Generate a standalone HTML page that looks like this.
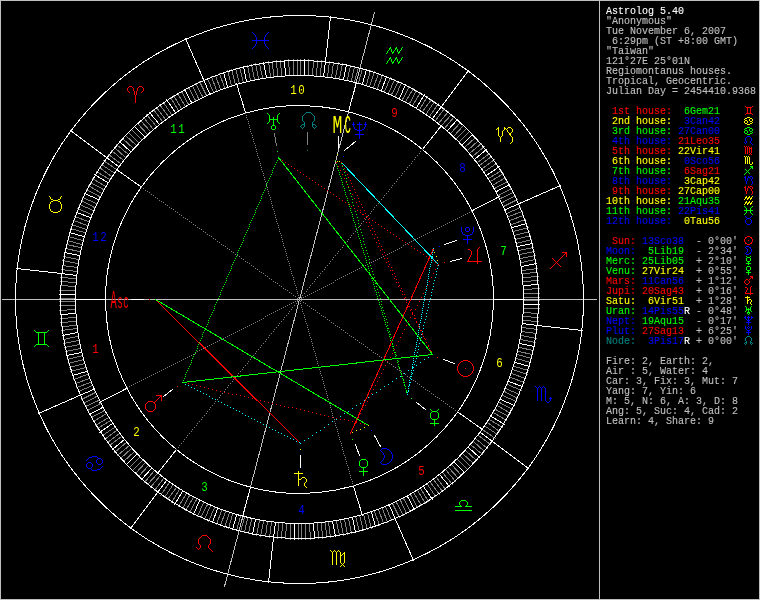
<!DOCTYPE html>
<html><head><meta charset="utf-8"><title>Astrolog 5.40</title>
<style>
html,body{margin:0;padding:0;background:#000;}
svg{display:block}
.t{font-family:"Liberation Mono",monospace;font-size:10px;stroke-width:.1px;white-space:pre;}
.g{font-family:"Liberation Mono",monospace;font-size:25.8px}
.h{font-family:"Liberation Mono",monospace;font-size:13.5px}
svg{will-change:transform}
line,circle,path,polyline{stroke-width:1;shape-rendering:crispEdges}
line{stroke-linecap:square}
path{fill:none;stroke-linecap:square;stroke-linejoin:miter}
.d{stroke-linecap:butt;shape-rendering:crispEdges}
</style></head><body>
<svg width="760" height="600" viewBox="0 0 760 600">
<rect width="760" height="600" fill="#000"/>
<line x1="2.5" y1="299.5" x2="596.5" y2="299.5" stroke="#c0c0c0" />
<line x1="374.5" y1="12.5" x2="224.5" y2="586.5" stroke="#c0c0c0" />
<line x1="209.5" y1="93.5" x2="203.5" y2="79.5" stroke="#ffffff" />
<line x1="206.5" y1="95.5" x2="199.5" y2="81.5" stroke="#808080" />
<line x1="202.5" y1="96.5" x2="195.5" y2="83.5" stroke="#808080" />
<line x1="198.5" y1="98.5" x2="192.5" y2="85.5" stroke="#808080" />
<line x1="195.5" y1="100.5" x2="188.5" y2="87.5" stroke="#808080" />
<line x1="191.5" y1="102.5" x2="184.5" y2="89.5" stroke="#ffffff" />
<line x1="188.5" y1="104.5" x2="181.5" y2="91.5" stroke="#808080" />
<line x1="185.5" y1="106.5" x2="177.5" y2="93.5" stroke="#808080" />
<line x1="181.5" y1="108.5" x2="173.5" y2="95.5" stroke="#808080" />
<line x1="178.5" y1="110.5" x2="170.5" y2="97.5" stroke="#808080" />
<line x1="175.5" y1="112.5" x2="166.5" y2="99.5" stroke="#ffffff" />
<line x1="171.5" y1="114.5" x2="163.5" y2="102.5" stroke="#808080" />
<line x1="168.5" y1="116.5" x2="159.5" y2="104.5" stroke="#808080" />
<line x1="165.5" y1="119.5" x2="156.5" y2="107.5" stroke="#808080" />
<line x1="162.5" y1="121.5" x2="153.5" y2="109.5" stroke="#808080" />
<line x1="159.5" y1="124.5" x2="149.5" y2="112.5" stroke="#ffffff" />
<line x1="156.5" y1="126.5" x2="146.5" y2="114.5" stroke="#808080" />
<line x1="153.5" y1="129.5" x2="143.5" y2="117.5" stroke="#808080" />
<line x1="150.5" y1="131.5" x2="140.5" y2="120.5" stroke="#808080" />
<line x1="147.5" y1="134.5" x2="137.5" y2="123.5" stroke="#808080" />
<line x1="144.5" y1="136.5" x2="134.5" y2="126.5" stroke="#ffffff" />
<line x1="141.5" y1="139.5" x2="131.5" y2="129.5" stroke="#808080" />
<line x1="138.5" y1="142.5" x2="128.5" y2="132.5" stroke="#808080" />
<line x1="136.5" y1="145.5" x2="125.5" y2="135.5" stroke="#808080" />
<line x1="133.5" y1="148.5" x2="122.5" y2="138.5" stroke="#808080" />
<line x1="130.5" y1="151.5" x2="119.5" y2="141.5" stroke="#ffffff" />
<line x1="128.5" y1="154.5" x2="116.5" y2="144.5" stroke="#808080" />
<line x1="125.5" y1="157.5" x2="114.5" y2="147.5" stroke="#808080" />
<line x1="123.5" y1="160.5" x2="111.5" y2="150.5" stroke="#808080" />
<line x1="120.5" y1="163.5" x2="108.5" y2="154.5" stroke="#808080" />
<line x1="118.5" y1="166.5" x2="106.5" y2="157.5" stroke="#ffffff" />
<line x1="116.5" y1="169.5" x2="103.5" y2="160.5" stroke="#808080" />
<line x1="113.5" y1="172.5" x2="101.5" y2="164.5" stroke="#808080" />
<line x1="111.5" y1="176.5" x2="99.5" y2="167.5" stroke="#808080" />
<line x1="109.5" y1="179.5" x2="96.5" y2="171.5" stroke="#808080" />
<line x1="107.5" y1="182.5" x2="94.5" y2="174.5" stroke="#ffffff" />
<line x1="105.5" y1="186.5" x2="92.5" y2="178.5" stroke="#808080" />
<line x1="103.5" y1="189.5" x2="90.5" y2="182.5" stroke="#808080" />
<line x1="101.5" y1="193.5" x2="88.5" y2="185.5" stroke="#808080" />
<line x1="99.5" y1="196.5" x2="86.5" y2="189.5" stroke="#808080" />
<line x1="98.5" y1="199.5" x2="84.5" y2="193.5" stroke="#ffffff" />
<line x1="96.5" y1="203.5" x2="82.5" y2="197.5" stroke="#808080" />
<line x1="94.5" y1="207.5" x2="81.5" y2="200.5" stroke="#808080" />
<line x1="93.5" y1="210.5" x2="79.5" y2="204.5" stroke="#808080" />
<line x1="91.5" y1="214.5" x2="77.5" y2="208.5" stroke="#808080" />
<line x1="90.5" y1="217.5" x2="76.5" y2="212.5" stroke="#ffffff" />
<line x1="88.5" y1="221.5" x2="74.5" y2="216.5" stroke="#808080" />
<line x1="87.5" y1="225.5" x2="73.5" y2="220.5" stroke="#808080" />
<line x1="86.5" y1="229.5" x2="71.5" y2="224.5" stroke="#808080" />
<line x1="84.5" y1="232.5" x2="70.5" y2="228.5" stroke="#808080" />
<line x1="83.5" y1="236.5" x2="69.5" y2="232.5" stroke="#ffffff" />
<line x1="82.5" y1="240.5" x2="68.5" y2="236.5" stroke="#808080" />
<line x1="81.5" y1="244.5" x2="67.5" y2="240.5" stroke="#808080" />
<line x1="80.5" y1="247.5" x2="66.5" y2="244.5" stroke="#808080" />
<line x1="79.5" y1="251.5" x2="65.5" y2="248.5" stroke="#808080" />
<line x1="79.5" y1="255.5" x2="64.5" y2="252.5" stroke="#ffffff" />
<line x1="78.5" y1="259.5" x2="63.5" y2="256.5" stroke="#808080" />
<line x1="77.5" y1="263.5" x2="62.5" y2="260.5" stroke="#808080" />
<line x1="77.5" y1="267.5" x2="62.5" y2="265.5" stroke="#808080" />
<line x1="76.5" y1="271.5" x2="61.5" y2="269.5" stroke="#808080" />
<line x1="76.5" y1="275.5" x2="61.5" y2="273.5" stroke="#ffffff" />
<line x1="75.5" y1="278.5" x2="60.5" y2="277.5" stroke="#808080" />
<line x1="75.5" y1="282.5" x2="60.5" y2="281.5" stroke="#808080" />
<line x1="75.5" y1="286.5" x2="60.5" y2="285.5" stroke="#808080" />
<line x1="74.5" y1="290.5" x2="59.5" y2="290.5" stroke="#808080" />
<line x1="74.5" y1="294.5" x2="59.5" y2="294.5" stroke="#ffffff" />
<line x1="74.5" y1="298.5" x2="59.5" y2="298.5" stroke="#808080" />
<line x1="74.5" y1="301.5" x2="59.5" y2="301.5" stroke="#808080" />
<line x1="74.5" y1="305.5" x2="59.5" y2="305.5" stroke="#808080" />
<line x1="74.5" y1="309.5" x2="59.5" y2="310.5" stroke="#808080" />
<line x1="75.5" y1="313.5" x2="60.5" y2="314.5" stroke="#ffffff" />
<line x1="75.5" y1="317.5" x2="60.5" y2="318.5" stroke="#808080" />
<line x1="75.5" y1="321.5" x2="60.5" y2="322.5" stroke="#808080" />
<line x1="76.5" y1="325.5" x2="61.5" y2="326.5" stroke="#808080" />
<line x1="76.5" y1="328.5" x2="61.5" y2="330.5" stroke="#808080" />
<line x1="77.5" y1="332.5" x2="62.5" y2="335.5" stroke="#ffffff" />
<line x1="77.5" y1="336.5" x2="63.5" y2="339.5" stroke="#808080" />
<line x1="78.5" y1="340.5" x2="63.5" y2="343.5" stroke="#808080" />
<line x1="79.5" y1="344.5" x2="64.5" y2="347.5" stroke="#808080" />
<line x1="80.5" y1="348.5" x2="65.5" y2="351.5" stroke="#808080" />
<line x1="81.5" y1="352.5" x2="66.5" y2="355.5" stroke="#ffffff" />
<line x1="82.5" y1="355.5" x2="67.5" y2="359.5" stroke="#808080" />
<line x1="83.5" y1="359.5" x2="68.5" y2="363.5" stroke="#808080" />
<line x1="84.5" y1="363.5" x2="69.5" y2="367.5" stroke="#808080" />
<line x1="85.5" y1="367.5" x2="70.5" y2="371.5" stroke="#808080" />
<line x1="86.5" y1="371.5" x2="72.5" y2="375.5" stroke="#ffffff" />
<line x1="87.5" y1="374.5" x2="73.5" y2="379.5" stroke="#808080" />
<line x1="89.5" y1="378.5" x2="75.5" y2="383.5" stroke="#808080" />
<line x1="90.5" y1="382.5" x2="76.5" y2="387.5" stroke="#808080" />
<line x1="92.5" y1="385.5" x2="78.5" y2="391.5" stroke="#808080" />
<line x1="93.5" y1="389.5" x2="79.5" y2="395.5" stroke="#ffffff" />
<line x1="95.5" y1="392.5" x2="81.5" y2="399.5" stroke="#808080" />
<line x1="96.5" y1="396.5" x2="83.5" y2="403.5" stroke="#808080" />
<line x1="98.5" y1="400.5" x2="85.5" y2="406.5" stroke="#808080" />
<line x1="100.5" y1="403.5" x2="87.5" y2="410.5" stroke="#808080" />
<line x1="102.5" y1="407.5" x2="89.5" y2="414.5" stroke="#ffffff" />
<line x1="104.5" y1="410.5" x2="91.5" y2="417.5" stroke="#808080" />
<line x1="106.5" y1="413.5" x2="93.5" y2="421.5" stroke="#808080" />
<line x1="108.5" y1="417.5" x2="95.5" y2="425.5" stroke="#808080" />
<line x1="110.5" y1="420.5" x2="97.5" y2="428.5" stroke="#808080" />
<line x1="112.5" y1="423.5" x2="99.5" y2="432.5" stroke="#ffffff" />
<line x1="114.5" y1="427.5" x2="102.5" y2="435.5" stroke="#808080" />
<line x1="116.5" y1="430.5" x2="104.5" y2="439.5" stroke="#808080" />
<line x1="119.5" y1="433.5" x2="107.5" y2="442.5" stroke="#808080" />
<line x1="121.5" y1="436.5" x2="109.5" y2="445.5" stroke="#808080" />
<line x1="124.5" y1="439.5" x2="112.5" y2="449.5" stroke="#ffffff" />
<line x1="126.5" y1="442.5" x2="114.5" y2="452.5" stroke="#808080" />
<line x1="129.5" y1="445.5" x2="117.5" y2="455.5" stroke="#808080" />
<line x1="131.5" y1="448.5" x2="120.5" y2="458.5" stroke="#808080" />
<line x1="134.5" y1="451.5" x2="123.5" y2="461.5" stroke="#808080" />
<line x1="136.5" y1="454.5" x2="126.5" y2="464.5" stroke="#ffffff" />
<line x1="139.5" y1="457.5" x2="129.5" y2="467.5" stroke="#808080" />
<line x1="142.5" y1="460.5" x2="132.5" y2="470.5" stroke="#808080" />
<line x1="145.5" y1="462.5" x2="135.5" y2="473.5" stroke="#808080" />
<line x1="148.5" y1="465.5" x2="138.5" y2="476.5" stroke="#808080" />
<line x1="151.5" y1="468.5" x2="141.5" y2="479.5" stroke="#ffffff" />
<line x1="154.5" y1="470.5" x2="144.5" y2="482.5" stroke="#808080" />
<line x1="157.5" y1="473.5" x2="147.5" y2="484.5" stroke="#808080" />
<line x1="160.5" y1="475.5" x2="150.5" y2="487.5" stroke="#808080" />
<line x1="163.5" y1="478.5" x2="154.5" y2="490.5" stroke="#808080" />
<line x1="166.5" y1="480.5" x2="157.5" y2="492.5" stroke="#ffffff" />
<line x1="169.5" y1="482.5" x2="160.5" y2="495.5" stroke="#808080" />
<line x1="172.5" y1="485.5" x2="164.5" y2="497.5" stroke="#808080" />
<line x1="176.5" y1="487.5" x2="167.5" y2="499.5" stroke="#808080" />
<line x1="179.5" y1="489.5" x2="171.5" y2="502.5" stroke="#808080" />
<line x1="182.5" y1="491.5" x2="174.5" y2="504.5" stroke="#ffffff" />
<line x1="186.5" y1="493.5" x2="178.5" y2="506.5" stroke="#808080" />
<line x1="189.5" y1="495.5" x2="182.5" y2="508.5" stroke="#808080" />
<line x1="193.5" y1="497.5" x2="185.5" y2="510.5" stroke="#808080" />
<line x1="196.5" y1="499.5" x2="189.5" y2="512.5" stroke="#808080" />
<line x1="199.5" y1="500.5" x2="193.5" y2="514.5" stroke="#ffffff" />
<line x1="203.5" y1="502.5" x2="197.5" y2="516.5" stroke="#808080" />
<line x1="207.5" y1="504.5" x2="200.5" y2="517.5" stroke="#808080" />
<line x1="210.5" y1="505.5" x2="204.5" y2="519.5" stroke="#808080" />
<line x1="214.5" y1="507.5" x2="208.5" y2="521.5" stroke="#808080" />
<line x1="217.5" y1="508.5" x2="212.5" y2="522.5" stroke="#ffffff" />
<line x1="221.5" y1="510.5" x2="216.5" y2="524.5" stroke="#808080" />
<line x1="225.5" y1="511.5" x2="220.5" y2="525.5" stroke="#808080" />
<line x1="229.5" y1="512.5" x2="224.5" y2="527.5" stroke="#808080" />
<line x1="232.5" y1="514.5" x2="228.5" y2="528.5" stroke="#808080" />
<line x1="236.5" y1="515.5" x2="232.5" y2="529.5" stroke="#ffffff" />
<line x1="240.5" y1="516.5" x2="236.5" y2="530.5" stroke="#808080" />
<line x1="244.5" y1="517.5" x2="240.5" y2="531.5" stroke="#808080" />
<line x1="247.5" y1="518.5" x2="244.5" y2="532.5" stroke="#808080" />
<line x1="251.5" y1="519.5" x2="248.5" y2="533.5" stroke="#808080" />
<line x1="255.5" y1="519.5" x2="252.5" y2="534.5" stroke="#ffffff" />
<line x1="259.5" y1="520.5" x2="256.5" y2="535.5" stroke="#808080" />
<line x1="263.5" y1="521.5" x2="260.5" y2="536.5" stroke="#808080" />
<line x1="267.5" y1="521.5" x2="265.5" y2="536.5" stroke="#808080" />
<line x1="271.5" y1="522.5" x2="269.5" y2="537.5" stroke="#808080" />
<line x1="275.5" y1="522.5" x2="273.5" y2="537.5" stroke="#ffffff" />
<line x1="278.5" y1="523.5" x2="277.5" y2="538.5" stroke="#808080" />
<line x1="282.5" y1="523.5" x2="281.5" y2="538.5" stroke="#808080" />
<line x1="286.5" y1="523.5" x2="285.5" y2="538.5" stroke="#808080" />
<line x1="290.5" y1="524.5" x2="290.5" y2="539.5" stroke="#808080" />
<line x1="294.5" y1="524.5" x2="294.5" y2="539.5" stroke="#ffffff" />
<line x1="298.5" y1="524.5" x2="298.5" y2="539.5" stroke="#808080" />
<line x1="301.5" y1="524.5" x2="301.5" y2="539.5" stroke="#808080" />
<line x1="305.5" y1="524.5" x2="305.5" y2="539.5" stroke="#808080" />
<line x1="309.5" y1="524.5" x2="310.5" y2="539.5" stroke="#808080" />
<line x1="313.5" y1="523.5" x2="314.5" y2="538.5" stroke="#ffffff" />
<line x1="317.5" y1="523.5" x2="318.5" y2="538.5" stroke="#808080" />
<line x1="321.5" y1="523.5" x2="322.5" y2="538.5" stroke="#808080" />
<line x1="325.5" y1="522.5" x2="326.5" y2="537.5" stroke="#808080" />
<line x1="328.5" y1="522.5" x2="330.5" y2="537.5" stroke="#808080" />
<line x1="332.5" y1="521.5" x2="335.5" y2="536.5" stroke="#ffffff" />
<line x1="336.5" y1="521.5" x2="339.5" y2="535.5" stroke="#808080" />
<line x1="340.5" y1="520.5" x2="343.5" y2="535.5" stroke="#808080" />
<line x1="344.5" y1="519.5" x2="347.5" y2="534.5" stroke="#808080" />
<line x1="348.5" y1="518.5" x2="351.5" y2="533.5" stroke="#808080" />
<line x1="352.5" y1="517.5" x2="355.5" y2="532.5" stroke="#ffffff" />
<line x1="355.5" y1="516.5" x2="359.5" y2="531.5" stroke="#808080" />
<line x1="359.5" y1="515.5" x2="363.5" y2="530.5" stroke="#808080" />
<line x1="363.5" y1="514.5" x2="367.5" y2="529.5" stroke="#808080" />
<line x1="367.5" y1="513.5" x2="371.5" y2="528.5" stroke="#808080" />
<line x1="371.5" y1="512.5" x2="375.5" y2="526.5" stroke="#ffffff" />
<line x1="374.5" y1="511.5" x2="379.5" y2="525.5" stroke="#808080" />
<line x1="378.5" y1="509.5" x2="383.5" y2="523.5" stroke="#808080" />
<line x1="382.5" y1="508.5" x2="387.5" y2="522.5" stroke="#808080" />
<line x1="385.5" y1="506.5" x2="391.5" y2="520.5" stroke="#808080" />
<line x1="389.5" y1="505.5" x2="395.5" y2="519.5" stroke="#ffffff" />
<line x1="392.5" y1="503.5" x2="399.5" y2="517.5" stroke="#808080" />
<line x1="396.5" y1="502.5" x2="403.5" y2="515.5" stroke="#808080" />
<line x1="400.5" y1="500.5" x2="406.5" y2="513.5" stroke="#808080" />
<line x1="403.5" y1="498.5" x2="410.5" y2="511.5" stroke="#808080" />
<line x1="407.5" y1="496.5" x2="414.5" y2="509.5" stroke="#ffffff" />
<line x1="410.5" y1="494.5" x2="417.5" y2="507.5" stroke="#808080" />
<line x1="413.5" y1="492.5" x2="421.5" y2="505.5" stroke="#808080" />
<line x1="417.5" y1="490.5" x2="425.5" y2="503.5" stroke="#808080" />
<line x1="420.5" y1="488.5" x2="428.5" y2="501.5" stroke="#808080" />
<line x1="423.5" y1="486.5" x2="432.5" y2="499.5" stroke="#ffffff" />
<line x1="427.5" y1="484.5" x2="435.5" y2="496.5" stroke="#808080" />
<line x1="430.5" y1="482.5" x2="439.5" y2="494.5" stroke="#808080" />
<line x1="433.5" y1="479.5" x2="442.5" y2="491.5" stroke="#808080" />
<line x1="436.5" y1="477.5" x2="445.5" y2="489.5" stroke="#808080" />
<line x1="439.5" y1="474.5" x2="449.5" y2="486.5" stroke="#ffffff" />
<line x1="442.5" y1="472.5" x2="452.5" y2="484.5" stroke="#808080" />
<line x1="445.5" y1="469.5" x2="455.5" y2="481.5" stroke="#808080" />
<line x1="448.5" y1="467.5" x2="458.5" y2="478.5" stroke="#808080" />
<line x1="451.5" y1="464.5" x2="461.5" y2="475.5" stroke="#808080" />
<line x1="454.5" y1="462.5" x2="464.5" y2="472.5" stroke="#ffffff" />
<line x1="457.5" y1="459.5" x2="467.5" y2="469.5" stroke="#808080" />
<line x1="460.5" y1="456.5" x2="470.5" y2="466.5" stroke="#808080" />
<line x1="462.5" y1="453.5" x2="473.5" y2="463.5" stroke="#808080" />
<line x1="465.5" y1="450.5" x2="476.5" y2="460.5" stroke="#808080" />
<line x1="468.5" y1="447.5" x2="479.5" y2="457.5" stroke="#ffffff" />
<line x1="470.5" y1="444.5" x2="482.5" y2="454.5" stroke="#808080" />
<line x1="473.5" y1="441.5" x2="484.5" y2="451.5" stroke="#808080" />
<line x1="475.5" y1="438.5" x2="487.5" y2="448.5" stroke="#808080" />
<line x1="478.5" y1="435.5" x2="490.5" y2="444.5" stroke="#808080" />
<line x1="480.5" y1="432.5" x2="492.5" y2="441.5" stroke="#ffffff" />
<line x1="482.5" y1="429.5" x2="495.5" y2="438.5" stroke="#808080" />
<line x1="485.5" y1="426.5" x2="497.5" y2="434.5" stroke="#808080" />
<line x1="487.5" y1="422.5" x2="499.5" y2="431.5" stroke="#808080" />
<line x1="489.5" y1="419.5" x2="502.5" y2="427.5" stroke="#808080" />
<line x1="491.5" y1="416.5" x2="504.5" y2="424.5" stroke="#ffffff" />
<line x1="493.5" y1="412.5" x2="506.5" y2="420.5" stroke="#808080" />
<line x1="495.5" y1="409.5" x2="508.5" y2="416.5" stroke="#808080" />
<line x1="497.5" y1="405.5" x2="510.5" y2="413.5" stroke="#808080" />
<line x1="499.5" y1="402.5" x2="512.5" y2="409.5" stroke="#808080" />
<line x1="500.5" y1="399.5" x2="514.5" y2="405.5" stroke="#ffffff" />
<line x1="502.5" y1="395.5" x2="516.5" y2="401.5" stroke="#808080" />
<line x1="504.5" y1="391.5" x2="517.5" y2="398.5" stroke="#808080" />
<line x1="505.5" y1="388.5" x2="519.5" y2="394.5" stroke="#808080" />
<line x1="507.5" y1="384.5" x2="521.5" y2="390.5" stroke="#808080" />
<line x1="508.5" y1="381.5" x2="522.5" y2="386.5" stroke="#ffffff" />
<line x1="510.5" y1="377.5" x2="524.5" y2="382.5" stroke="#808080" />
<line x1="511.5" y1="373.5" x2="525.5" y2="378.5" stroke="#808080" />
<line x1="512.5" y1="369.5" x2="527.5" y2="374.5" stroke="#808080" />
<line x1="514.5" y1="366.5" x2="528.5" y2="370.5" stroke="#808080" />
<line x1="515.5" y1="362.5" x2="529.5" y2="366.5" stroke="#ffffff" />
<line x1="516.5" y1="358.5" x2="530.5" y2="362.5" stroke="#808080" />
<line x1="517.5" y1="354.5" x2="531.5" y2="358.5" stroke="#808080" />
<line x1="518.5" y1="351.5" x2="532.5" y2="354.5" stroke="#808080" />
<line x1="519.5" y1="347.5" x2="533.5" y2="350.5" stroke="#808080" />
<line x1="519.5" y1="343.5" x2="534.5" y2="346.5" stroke="#ffffff" />
<line x1="520.5" y1="339.5" x2="535.5" y2="342.5" stroke="#808080" />
<line x1="521.5" y1="335.5" x2="536.5" y2="338.5" stroke="#808080" />
<line x1="521.5" y1="331.5" x2="536.5" y2="333.5" stroke="#808080" />
<line x1="522.5" y1="327.5" x2="537.5" y2="329.5" stroke="#808080" />
<line x1="522.5" y1="323.5" x2="537.5" y2="325.5" stroke="#ffffff" />
<line x1="523.5" y1="320.5" x2="538.5" y2="321.5" stroke="#808080" />
<line x1="523.5" y1="316.5" x2="538.5" y2="317.5" stroke="#808080" />
<line x1="523.5" y1="312.5" x2="538.5" y2="313.5" stroke="#808080" />
<line x1="524.5" y1="308.5" x2="539.5" y2="308.5" stroke="#808080" />
<line x1="524.5" y1="304.5" x2="539.5" y2="304.5" stroke="#ffffff" />
<line x1="524.5" y1="300.5" x2="539.5" y2="300.5" stroke="#808080" />
<line x1="524.5" y1="297.5" x2="539.5" y2="297.5" stroke="#808080" />
<line x1="524.5" y1="293.5" x2="539.5" y2="293.5" stroke="#808080" />
<line x1="524.5" y1="289.5" x2="539.5" y2="288.5" stroke="#808080" />
<line x1="523.5" y1="285.5" x2="538.5" y2="284.5" stroke="#ffffff" />
<line x1="523.5" y1="281.5" x2="538.5" y2="280.5" stroke="#808080" />
<line x1="523.5" y1="277.5" x2="538.5" y2="276.5" stroke="#808080" />
<line x1="522.5" y1="273.5" x2="537.5" y2="272.5" stroke="#808080" />
<line x1="522.5" y1="270.5" x2="537.5" y2="268.5" stroke="#808080" />
<line x1="521.5" y1="266.5" x2="536.5" y2="263.5" stroke="#ffffff" />
<line x1="521.5" y1="262.5" x2="535.5" y2="259.5" stroke="#808080" />
<line x1="520.5" y1="258.5" x2="535.5" y2="255.5" stroke="#808080" />
<line x1="519.5" y1="254.5" x2="534.5" y2="251.5" stroke="#808080" />
<line x1="518.5" y1="250.5" x2="533.5" y2="247.5" stroke="#808080" />
<line x1="517.5" y1="246.5" x2="532.5" y2="243.5" stroke="#ffffff" />
<line x1="516.5" y1="243.5" x2="531.5" y2="239.5" stroke="#808080" />
<line x1="515.5" y1="239.5" x2="530.5" y2="235.5" stroke="#808080" />
<line x1="514.5" y1="235.5" x2="529.5" y2="231.5" stroke="#808080" />
<line x1="513.5" y1="231.5" x2="528.5" y2="227.5" stroke="#808080" />
<line x1="512.5" y1="227.5" x2="526.5" y2="223.5" stroke="#ffffff" />
<line x1="511.5" y1="224.5" x2="525.5" y2="219.5" stroke="#808080" />
<line x1="509.5" y1="220.5" x2="523.5" y2="215.5" stroke="#808080" />
<line x1="508.5" y1="216.5" x2="522.5" y2="211.5" stroke="#808080" />
<line x1="506.5" y1="213.5" x2="520.5" y2="207.5" stroke="#808080" />
<line x1="505.5" y1="209.5" x2="519.5" y2="203.5" stroke="#ffffff" />
<line x1="503.5" y1="206.5" x2="517.5" y2="199.5" stroke="#808080" />
<line x1="502.5" y1="202.5" x2="515.5" y2="195.5" stroke="#808080" />
<line x1="500.5" y1="198.5" x2="513.5" y2="192.5" stroke="#808080" />
<line x1="498.5" y1="195.5" x2="511.5" y2="188.5" stroke="#808080" />
<line x1="496.5" y1="191.5" x2="509.5" y2="184.5" stroke="#ffffff" />
<line x1="494.5" y1="188.5" x2="507.5" y2="181.5" stroke="#808080" />
<line x1="492.5" y1="185.5" x2="505.5" y2="177.5" stroke="#808080" />
<line x1="490.5" y1="181.5" x2="503.5" y2="173.5" stroke="#808080" />
<line x1="488.5" y1="178.5" x2="501.5" y2="170.5" stroke="#808080" />
<line x1="486.5" y1="175.5" x2="499.5" y2="166.5" stroke="#ffffff" />
<line x1="484.5" y1="171.5" x2="496.5" y2="163.5" stroke="#808080" />
<line x1="482.5" y1="168.5" x2="494.5" y2="159.5" stroke="#808080" />
<line x1="479.5" y1="165.5" x2="491.5" y2="156.5" stroke="#808080" />
<line x1="477.5" y1="162.5" x2="489.5" y2="153.5" stroke="#808080" />
<line x1="474.5" y1="159.5" x2="486.5" y2="149.5" stroke="#ffffff" />
<line x1="472.5" y1="156.5" x2="484.5" y2="146.5" stroke="#808080" />
<line x1="469.5" y1="153.5" x2="481.5" y2="143.5" stroke="#808080" />
<line x1="467.5" y1="150.5" x2="478.5" y2="140.5" stroke="#808080" />
<line x1="464.5" y1="147.5" x2="475.5" y2="137.5" stroke="#808080" />
<line x1="462.5" y1="144.5" x2="472.5" y2="134.5" stroke="#ffffff" />
<line x1="459.5" y1="141.5" x2="469.5" y2="131.5" stroke="#808080" />
<line x1="456.5" y1="138.5" x2="466.5" y2="128.5" stroke="#808080" />
<line x1="453.5" y1="136.5" x2="463.5" y2="125.5" stroke="#808080" />
<line x1="450.5" y1="133.5" x2="460.5" y2="122.5" stroke="#808080" />
<line x1="447.5" y1="130.5" x2="457.5" y2="119.5" stroke="#ffffff" />
<line x1="444.5" y1="128.5" x2="454.5" y2="116.5" stroke="#808080" />
<line x1="441.5" y1="125.5" x2="451.5" y2="114.5" stroke="#808080" />
<line x1="438.5" y1="123.5" x2="448.5" y2="111.5" stroke="#808080" />
<line x1="435.5" y1="120.5" x2="444.5" y2="108.5" stroke="#808080" />
<line x1="432.5" y1="118.5" x2="441.5" y2="106.5" stroke="#ffffff" />
<line x1="429.5" y1="116.5" x2="438.5" y2="103.5" stroke="#808080" />
<line x1="426.5" y1="113.5" x2="434.5" y2="101.5" stroke="#808080" />
<line x1="422.5" y1="111.5" x2="431.5" y2="99.5" stroke="#808080" />
<line x1="419.5" y1="109.5" x2="427.5" y2="96.5" stroke="#808080" />
<line x1="416.5" y1="107.5" x2="424.5" y2="94.5" stroke="#ffffff" />
<line x1="412.5" y1="105.5" x2="420.5" y2="92.5" stroke="#808080" />
<line x1="409.5" y1="103.5" x2="416.5" y2="90.5" stroke="#808080" />
<line x1="405.5" y1="101.5" x2="413.5" y2="88.5" stroke="#808080" />
<line x1="402.5" y1="99.5" x2="409.5" y2="86.5" stroke="#808080" />
<line x1="399.5" y1="98.5" x2="405.5" y2="84.5" stroke="#ffffff" />
<line x1="395.5" y1="96.5" x2="401.5" y2="82.5" stroke="#808080" />
<line x1="391.5" y1="94.5" x2="398.5" y2="81.5" stroke="#808080" />
<line x1="388.5" y1="93.5" x2="394.5" y2="79.5" stroke="#808080" />
<line x1="384.5" y1="91.5" x2="390.5" y2="77.5" stroke="#808080" />
<line x1="381.5" y1="90.5" x2="386.5" y2="76.5" stroke="#ffffff" />
<line x1="377.5" y1="88.5" x2="382.5" y2="74.5" stroke="#808080" />
<line x1="373.5" y1="87.5" x2="378.5" y2="73.5" stroke="#808080" />
<line x1="369.5" y1="86.5" x2="374.5" y2="71.5" stroke="#808080" />
<line x1="366.5" y1="84.5" x2="370.5" y2="70.5" stroke="#808080" />
<line x1="362.5" y1="83.5" x2="366.5" y2="69.5" stroke="#ffffff" />
<line x1="358.5" y1="82.5" x2="362.5" y2="68.5" stroke="#808080" />
<line x1="354.5" y1="81.5" x2="358.5" y2="67.5" stroke="#808080" />
<line x1="351.5" y1="80.5" x2="354.5" y2="66.5" stroke="#808080" />
<line x1="347.5" y1="79.5" x2="350.5" y2="65.5" stroke="#808080" />
<line x1="343.5" y1="79.5" x2="346.5" y2="64.5" stroke="#ffffff" />
<line x1="339.5" y1="78.5" x2="342.5" y2="63.5" stroke="#808080" />
<line x1="335.5" y1="77.5" x2="338.5" y2="62.5" stroke="#808080" />
<line x1="331.5" y1="77.5" x2="333.5" y2="62.5" stroke="#808080" />
<line x1="327.5" y1="76.5" x2="329.5" y2="61.5" stroke="#808080" />
<line x1="323.5" y1="76.5" x2="325.5" y2="61.5" stroke="#ffffff" />
<line x1="320.5" y1="75.5" x2="321.5" y2="60.5" stroke="#808080" />
<line x1="316.5" y1="75.5" x2="317.5" y2="60.5" stroke="#808080" />
<line x1="312.5" y1="75.5" x2="313.5" y2="60.5" stroke="#808080" />
<line x1="308.5" y1="74.5" x2="308.5" y2="59.5" stroke="#808080" />
<line x1="304.5" y1="74.5" x2="304.5" y2="59.5" stroke="#ffffff" />
<line x1="300.5" y1="74.5" x2="300.5" y2="59.5" stroke="#808080" />
<line x1="297.5" y1="74.5" x2="297.5" y2="59.5" stroke="#808080" />
<line x1="293.5" y1="74.5" x2="293.5" y2="59.5" stroke="#808080" />
<line x1="289.5" y1="74.5" x2="288.5" y2="59.5" stroke="#808080" />
<line x1="285.5" y1="75.5" x2="284.5" y2="60.5" stroke="#ffffff" />
<line x1="281.5" y1="75.5" x2="280.5" y2="60.5" stroke="#808080" />
<line x1="277.5" y1="75.5" x2="276.5" y2="60.5" stroke="#808080" />
<line x1="273.5" y1="76.5" x2="272.5" y2="61.5" stroke="#808080" />
<line x1="270.5" y1="76.5" x2="268.5" y2="61.5" stroke="#808080" />
<line x1="266.5" y1="77.5" x2="263.5" y2="62.5" stroke="#ffffff" />
<line x1="262.5" y1="77.5" x2="259.5" y2="63.5" stroke="#808080" />
<line x1="258.5" y1="78.5" x2="255.5" y2="63.5" stroke="#808080" />
<line x1="254.5" y1="79.5" x2="251.5" y2="64.5" stroke="#808080" />
<line x1="250.5" y1="80.5" x2="247.5" y2="65.5" stroke="#808080" />
<line x1="246.5" y1="81.5" x2="243.5" y2="66.5" stroke="#ffffff" />
<line x1="243.5" y1="82.5" x2="239.5" y2="67.5" stroke="#808080" />
<line x1="239.5" y1="83.5" x2="235.5" y2="68.5" stroke="#808080" />
<line x1="235.5" y1="84.5" x2="231.5" y2="69.5" stroke="#808080" />
<line x1="231.5" y1="85.5" x2="227.5" y2="70.5" stroke="#808080" />
<line x1="227.5" y1="86.5" x2="223.5" y2="72.5" stroke="#ffffff" />
<line x1="224.5" y1="87.5" x2="219.5" y2="73.5" stroke="#808080" />
<line x1="220.5" y1="89.5" x2="215.5" y2="75.5" stroke="#808080" />
<line x1="216.5" y1="90.5" x2="211.5" y2="76.5" stroke="#808080" />
<line x1="213.5" y1="92.5" x2="207.5" y2="78.5" stroke="#808080" />
<circle cx="299.5" cy="299.5" r="194" stroke="#ffffff" fill="none"/>
<circle cx="299.5" cy="299.5" r="224" stroke="#ffffff" fill="none"/>
<circle cx="299.5" cy="299.5" r="239" stroke="#ffffff" fill="none"/>
<circle cx="299.5" cy="299.5" r="284" stroke="#ffffff" fill="none"/>
<line x1="185.5" y1="38.5" x2="203.5" y2="79.5" stroke="#ffffff" />
<line x1="74.5" y1="299.5" x2="104.5" y2="299.5" stroke="#ffffff" />
<line x1="70.5" y1="130.5" x2="106.5" y2="157.5" stroke="#ffffff" />
<line x1="99.5" y1="402.5" x2="126.5" y2="388.5" stroke="#ffffff" />
<path d="M299 299.5h1M297 300.5h1M295 301.5h1M293 302.5h1M291 303.5h1M289 304.5h1M287 305.5h1M285 306.5h1M283 307.5h1M281 308.5h1M279 309.5h1M277 310.5h1M275 311.5h1M273 312.5h1M271 313.5h1M269 314.5h1M267 315.5h1M265 316.5h1M263 318.5h1M261 319.5h1M259 320.5h1M257 321.5h1M255 322.5h1M253 323.5h1M251 324.5h1M249 325.5h1M247 326.5h1M245 327.5h1M243 328.5h1M241 329.5h1M239 330.5h1M237 331.5h1M235 332.5h1M233 333.5h1M231 334.5h1M229 335.5h1M227 336.5h1M225 337.5h1M223 338.5h1M221 339.5h1M219 340.5h1M217 341.5h1M215 342.5h1M213 343.5h1M211 344.5h1M209 345.5h1M207 346.5h1M205 347.5h1M203 348.5h1M201 349.5h1M199 350.5h1M197 351.5h1M195 353.5h1M193 354.5h1M191 355.5h1M189 356.5h1M187 357.5h1M185 358.5h1M183 359.5h1M181 360.5h1M179 361.5h1M177 362.5h1M175 363.5h1M173 364.5h1M171 365.5h1M169 366.5h1M167 367.5h1M165 368.5h1M163 369.5h1M161 370.5h1M159 371.5h1M157 372.5h1M155 373.5h1M153 374.5h1M151 375.5h1M149 376.5h1M147 377.5h1M145 378.5h1M143 379.5h1M141 380.5h1M139 381.5h1M137 382.5h1M135 383.5h1M133 384.5h1M131 385.5h1M129 386.5h1M127 387.5h1" stroke="#808080" class="d"/>
<line x1="16.5" y1="268.5" x2="61.5" y2="273.5" stroke="#ffffff" />
<line x1="157.5" y1="473.5" x2="176.5" y2="449.5" stroke="#ffffff" />
<path d="M299 299.5h1M297 301.5h1M296 303.5h1M294 305.5h1M292 307.5h1M291 309.5h1M289 311.5h1M288 313.5h1M286 315.5h1M284 317.5h1M283 319.5h1M281 321.5h1M279 323.5h1M278 325.5h1M276 327.5h1M274 329.5h1M273 331.5h1M271 333.5h1M269 335.5h1M268 337.5h1M266 339.5h1M265 341.5h1M263 343.5h1M261 345.5h1M260 347.5h1M258 349.5h1M256 351.5h1M255 353.5h1M253 355.5h1M251 357.5h1M250 359.5h1M248 361.5h1M247 363.5h1M245 365.5h1M243 367.5h1M242 369.5h1M240 371.5h1M238 373.5h1M237 375.5h1M235 377.5h1M233 379.5h1M232 381.5h1M230 383.5h1M228 385.5h1M227 387.5h1M225 389.5h1M224 391.5h1M222 393.5h1M220 395.5h1M219 397.5h1M217 399.5h1M215 401.5h1M214 403.5h1M212 405.5h1M210 407.5h1M209 409.5h1M207 411.5h1M206 413.5h1M204 415.5h1M202 417.5h1M201 419.5h1M199 421.5h1M197 423.5h1M196 425.5h1M194 427.5h1M192 429.5h1M191 431.5h1M189 433.5h1M187 435.5h1M186 437.5h1M184 439.5h1M183 441.5h1M181 443.5h1M179 445.5h1M178 447.5h1M176 449.5h1" stroke="#808080" class="d"/>
<line x1="38.5" y1="413.5" x2="79.5" y2="395.5" stroke="#ffffff" />
<line x1="242.5" y1="516.5" x2="250.5" y2="487.5" stroke="#ffffff" />
<line x1="130.5" y1="528.5" x2="157.5" y2="492.5" stroke="#ffffff" />
<line x1="362.5" y1="515.5" x2="353.5" y2="486.5" stroke="#ffffff" />
<path d="M299 299.5h1M300 301.5h1M300 303.5h1M301 305.5h1M301 307.5h1M302 309.5h1M302 311.5h1M303 313.5h1M304 315.5h1M304 317.5h1M305 319.5h1M305 321.5h1M306 323.5h1M307 325.5h1M307 327.5h1M308 329.5h1M308 331.5h1M309 333.5h1M309 335.5h1M310 337.5h1M311 339.5h1M311 341.5h1M312 343.5h1M312 345.5h1M313 347.5h1M313 349.5h1M314 351.5h1M315 353.5h1M315 355.5h1M316 357.5h1M316 359.5h1M317 361.5h1M317 363.5h1M318 365.5h1M319 367.5h1M319 369.5h1M320 371.5h1M320 373.5h1M321 375.5h1M322 377.5h1M322 379.5h1M323 381.5h1M323 383.5h1M324 385.5h1M324 387.5h1M325 389.5h1M326 391.5h1M326 393.5h1M327 395.5h1M327 397.5h1M328 399.5h1M328 401.5h1M329 403.5h1M330 405.5h1M330 407.5h1M331 409.5h1M331 411.5h1M332 413.5h1M332 415.5h1M333 417.5h1M334 419.5h1M334 421.5h1M335 423.5h1M335 425.5h1M336 427.5h1M337 429.5h1M337 431.5h1M338 433.5h1M338 435.5h1M339 437.5h1M339 439.5h1M340 441.5h1M341 443.5h1M341 445.5h1M342 447.5h1M342 449.5h1M343 451.5h1M343 453.5h1M344 455.5h1M345 457.5h1M345 459.5h1M346 461.5h1M346 463.5h1M347 465.5h1M348 467.5h1M348 469.5h1M349 471.5h1M349 473.5h1M350 475.5h1M350 477.5h1M351 479.5h1M352 481.5h1M352 483.5h1M353 485.5h1" stroke="#808080" class="d"/>
<line x1="268.5" y1="582.5" x2="273.5" y2="537.5" stroke="#ffffff" />
<line x1="482.5" y1="429.5" x2="458.5" y2="412.5" stroke="#ffffff" />
<path d="M299 299.5h1M301 300.5h1M303 302.5h1M305 303.5h1M307 305.5h1M309 306.5h1M311 308.5h1M313 309.5h1M315 310.5h1M317 312.5h1M319 313.5h1M321 315.5h1M323 316.5h1M325 317.5h1M327 319.5h1M329 320.5h1M331 322.5h1M333 323.5h1M335 325.5h1M337 326.5h1M339 327.5h1M341 329.5h1M343 330.5h1M345 332.5h1M347 333.5h1M349 335.5h1M351 336.5h1M353 337.5h1M355 339.5h1M357 340.5h1M359 342.5h1M361 343.5h1M363 344.5h1M365 346.5h1M367 347.5h1M369 349.5h1M371 350.5h1M373 352.5h1M375 353.5h1M377 354.5h1M379 356.5h1M381 357.5h1M383 359.5h1M385 360.5h1M387 362.5h1M389 363.5h1M391 364.5h1M393 366.5h1M395 367.5h1M397 369.5h1M399 370.5h1M401 371.5h1M403 373.5h1M405 374.5h1M407 376.5h1M409 377.5h1M411 379.5h1M413 380.5h1M415 381.5h1M417 383.5h1M419 384.5h1M421 386.5h1M423 387.5h1M425 389.5h1M427 390.5h1M429 391.5h1M431 393.5h1M433 394.5h1M435 396.5h1M437 397.5h1M439 398.5h1M441 400.5h1M443 401.5h1M445 403.5h1M447 404.5h1M449 406.5h1M451 407.5h1M453 408.5h1M455 410.5h1M457 411.5h1" stroke="#808080" class="d"/>
<line x1="413.5" y1="560.5" x2="395.5" y2="519.5" stroke="#ffffff" />
<line x1="524.5" y1="299.5" x2="494.5" y2="299.5" stroke="#ffffff" />
<line x1="528.5" y1="468.5" x2="492.5" y2="441.5" stroke="#ffffff" />
<line x1="499.5" y1="196.5" x2="472.5" y2="210.5" stroke="#ffffff" />
<path d="M299 299.5h1M301 298.5h1M303 297.5h1M305 296.5h1M307 295.5h1M309 294.5h1M311 293.5h1M313 292.5h1M315 291.5h1M317 290.5h1M319 289.5h1M321 288.5h1M323 287.5h1M325 286.5h1M327 285.5h1M329 284.5h1M331 283.5h1M333 282.5h1M335 280.5h1M337 279.5h1M339 278.5h1M341 277.5h1M343 276.5h1M345 275.5h1M347 274.5h1M349 273.5h1M351 272.5h1M353 271.5h1M355 270.5h1M357 269.5h1M359 268.5h1M361 267.5h1M363 266.5h1M365 265.5h1M367 264.5h1M369 263.5h1M371 262.5h1M373 261.5h1M375 260.5h1M377 259.5h1M379 258.5h1M381 257.5h1M383 256.5h1M385 255.5h1M387 254.5h1M389 253.5h1M391 252.5h1M393 251.5h1M395 250.5h1M397 249.5h1M399 248.5h1M401 247.5h1M403 245.5h1M405 244.5h1M407 243.5h1M409 242.5h1M411 241.5h1M413 240.5h1M415 239.5h1M417 238.5h1M419 237.5h1M421 236.5h1M423 235.5h1M425 234.5h1M427 233.5h1M429 232.5h1M431 231.5h1M433 230.5h1M435 229.5h1M437 228.5h1M439 227.5h1M441 226.5h1M443 225.5h1M445 224.5h1M447 223.5h1M449 222.5h1M451 221.5h1M453 220.5h1M455 219.5h1M457 218.5h1M459 217.5h1M461 216.5h1M463 215.5h1M465 214.5h1M467 213.5h1M469 212.5h1M471 211.5h1" stroke="#808080" class="d"/>
<line x1="582.5" y1="330.5" x2="537.5" y2="325.5" stroke="#ffffff" />
<line x1="441.5" y1="125.5" x2="422.5" y2="149.5" stroke="#ffffff" />
<path d="M299 299.5h1M301 297.5h1M302 295.5h1M304 293.5h1M306 291.5h1M307 289.5h1M309 287.5h1M310 285.5h1M312 283.5h1M314 281.5h1M315 279.5h1M317 277.5h1M319 275.5h1M320 273.5h1M322 271.5h1M324 269.5h1M325 267.5h1M327 265.5h1M329 263.5h1M330 261.5h1M332 259.5h1M333 257.5h1M335 255.5h1M337 253.5h1M338 251.5h1M340 249.5h1M342 247.5h1M343 245.5h1M345 243.5h1M347 241.5h1M348 239.5h1M350 237.5h1M351 235.5h1M353 233.5h1M355 231.5h1M356 229.5h1M358 227.5h1M360 225.5h1M361 223.5h1M363 221.5h1M365 219.5h1M366 217.5h1M368 215.5h1M370 213.5h1M371 211.5h1M373 209.5h1M374 207.5h1M376 205.5h1M378 203.5h1M379 201.5h1M381 199.5h1M383 197.5h1M384 195.5h1M386 193.5h1M388 191.5h1M389 189.5h1M391 187.5h1M392 185.5h1M394 183.5h1M396 181.5h1M397 179.5h1M399 177.5h1M401 175.5h1M402 173.5h1M404 171.5h1M406 169.5h1M407 167.5h1M409 165.5h1M411 163.5h1M412 161.5h1M414 159.5h1M415 157.5h1M417 155.5h1M419 153.5h1M420 151.5h1M422 149.5h1" stroke="#808080" class="d"/>
<line x1="560.5" y1="185.5" x2="519.5" y2="203.5" stroke="#ffffff" />
<line x1="356.5" y1="82.5" x2="348.5" y2="111.5" stroke="#ffffff" />
<line x1="468.5" y1="70.5" x2="441.5" y2="106.5" stroke="#ffffff" />
<line x1="236.5" y1="83.5" x2="245.5" y2="112.5" stroke="#ffffff" />
<path d="M299 299.5h1M298 297.5h1M298 295.5h1M297 293.5h1M297 291.5h1M296 289.5h1M296 287.5h1M295 285.5h1M294 283.5h1M294 281.5h1M293 279.5h1M293 277.5h1M292 275.5h1M291 273.5h1M291 271.5h1M290 269.5h1M290 267.5h1M289 265.5h1M289 263.5h1M288 261.5h1M287 259.5h1M287 257.5h1M286 255.5h1M286 253.5h1M285 251.5h1M285 249.5h1M284 247.5h1M283 245.5h1M283 243.5h1M282 241.5h1M282 239.5h1M281 237.5h1M281 235.5h1M280 233.5h1M279 231.5h1M279 229.5h1M278 227.5h1M278 225.5h1M277 223.5h1M276 221.5h1M276 219.5h1M275 217.5h1M275 215.5h1M274 213.5h1M274 211.5h1M273 209.5h1M272 207.5h1M272 205.5h1M271 203.5h1M271 201.5h1M270 199.5h1M270 197.5h1M269 195.5h1M268 193.5h1M268 191.5h1M267 189.5h1M267 187.5h1M266 185.5h1M266 183.5h1M265 181.5h1M264 179.5h1M264 177.5h1M263 175.5h1M263 173.5h1M262 171.5h1M261 169.5h1M261 167.5h1M260 165.5h1M260 163.5h1M259 161.5h1M259 159.5h1M258 157.5h1M257 155.5h1M257 153.5h1M256 151.5h1M256 149.5h1M255 147.5h1M255 145.5h1M254 143.5h1M253 141.5h1M253 139.5h1M252 137.5h1M252 135.5h1M251 133.5h1M250 131.5h1M250 129.5h1M249 127.5h1M249 125.5h1M248 123.5h1M248 121.5h1M247 119.5h1M246 117.5h1M246 115.5h1M245 113.5h1" stroke="#808080" class="d"/>
<line x1="330.5" y1="16.5" x2="325.5" y2="61.5" stroke="#ffffff" />
<line x1="116.5" y1="169.5" x2="140.5" y2="186.5" stroke="#ffffff" />
<path d="M299 299.5h1M297 298.5h1M295 296.5h1M293 295.5h1M291 293.5h1M289 292.5h1M287 290.5h1M285 289.5h1M283 288.5h1M281 286.5h1M279 285.5h1M277 283.5h1M275 282.5h1M273 281.5h1M271 279.5h1M269 278.5h1M267 276.5h1M265 275.5h1M263 273.5h1M261 272.5h1M259 271.5h1M257 269.5h1M255 268.5h1M253 266.5h1M251 265.5h1M249 263.5h1M247 262.5h1M245 261.5h1M243 259.5h1M241 258.5h1M239 256.5h1M237 255.5h1M235 254.5h1M233 252.5h1M231 251.5h1M229 249.5h1M227 248.5h1M225 246.5h1M223 245.5h1M221 244.5h1M219 242.5h1M217 241.5h1M215 239.5h1M213 238.5h1M211 236.5h1M209 235.5h1M207 234.5h1M205 232.5h1M203 231.5h1M201 229.5h1M199 228.5h1M197 227.5h1M195 225.5h1M193 224.5h1M191 222.5h1M189 221.5h1M187 219.5h1M185 218.5h1M183 217.5h1M181 215.5h1M179 214.5h1M177 212.5h1M175 211.5h1M173 209.5h1M171 208.5h1M169 207.5h1M167 205.5h1M165 204.5h1M163 202.5h1M161 201.5h1M159 200.5h1M157 198.5h1M155 197.5h1M153 195.5h1M151 194.5h1M149 192.5h1M147 191.5h1M145 190.5h1M143 188.5h1M141 187.5h1" stroke="#808080" class="d"/>
<path d="M133.5 88v3M137.5 88v3M136.5 91v4M127.5 88v3M143.5 88v3M134.5 91v4M135.5 95v8M129 86.5h3M139 86.5h3M128 87.5h1M132 87.5h1M138 87.5h1M142 87.5h1M128 91.5h1M142 91.5h1M129 92.5h1M141 92.5h1" stroke="#ff0000" class="d"/>
<text transform="translate(95.5,353) scale(.8,1)" x="0" fill="#ff0000" text-anchor="middle" class="h">1</text>
<path d="M49.5 204v5M61.5 204v5M49 196.5h1M61 196.5h1M50 197.5h1M60 197.5h1M50 198.5h1M60 198.5h1M51 199.5h2M58 199.5h2M53 200.5h5M51 201.5h2M58 201.5h2M50 202.5h1M60 202.5h1M50 203.5h1M60 203.5h1M50 209.5h1M60 209.5h1M50 210.5h1M60 210.5h1M51 211.5h2M58 211.5h2M53 212.5h5" stroke="#ffff00" class="d"/>
<text transform="translate(136.5,436) scale(.8,1)" x="0" fill="#ffff00" text-anchor="middle" class="h">2</text>
<path d="M44.5 332v13M38.5 332v13M34 330.5h1M48 330.5h1M35 331.5h1M47 331.5h1M36 332.5h2M39 332.5h5M45 332.5h2M36 344.5h2M39 344.5h5M45 344.5h2M35 345.5h1M47 345.5h1M34 346.5h1M48 346.5h1" stroke="#00ff00" class="d"/>
<text transform="translate(204.5,491) scale(.8,1)" x="0" fill="#00ff00" text-anchor="middle" class="h">3</text>
<path d="M92.5 464v3M96.5 460v3M86.5 464v3M102.5 460v3M92 456.5h5M89 457.5h3M97 457.5h1M88 458.5h1M98 458.5h3M87 459.5h1M97 459.5h1M101 459.5h1M86 460.5h1M88 462.5h3M87 463.5h1M91 463.5h1M97 463.5h1M101 463.5h1M98 464.5h3M102 466.5h1M87 467.5h1M91 467.5h1M101 467.5h1M88 468.5h3M100 468.5h1M91 469.5h1M97 469.5h3M92 470.5h5" stroke="#0000ff" class="d"/>
<text transform="translate(301.5,514) scale(.8,1)" x="0" fill="#0000ff" text-anchor="middle" class="h">4</text>
<path d="M208.5 545v3M198.5 539v5M210.5 539v5M200.5 545v3M202 535.5h5M201 536.5h1M207 536.5h1M200 537.5h1M208 537.5h1M199 538.5h1M209 538.5h1M199 544.5h1M209 544.5h1M196 547.5h1M197 548.5h1M199 548.5h1M209 548.5h1M198 549.5h1M210 549.5h1M211 550.5h1M212 551.5h1" stroke="#ff0000" class="d"/>
<text transform="translate(421.5,475) scale(.8,1)" x="0" fill="#ff0000" text-anchor="middle" class="h">5</text>
<path d="M332.5 552v13M340.5 552v11M344.5 552v11M336.5 552v13M330 550.5h1M334 550.5h1M338 550.5h1M331 551.5h1M333 551.5h1M335 551.5h1M337 551.5h1M339 551.5h1M343 553.5h1M342 554.5h1M341 555.5h1M341 563.5h1M343 563.5h1M342 564.5h1M341 565.5h1M343 565.5h1M340 566.5h1M344 566.5h1" stroke="#ffff00" class="d"/>
<text transform="translate(499.5,367) scale(.8,1)" x="0" fill="#ffff00" text-anchor="middle" class="h">6</text>
<path d="M467.5 502v3M459.5 502v3M461 500.5h5M460 501.5h1M466 501.5h1M460 505.5h1M466 505.5h1M455 506.5h7M465 506.5h7M455 510.5h17" stroke="#00ff00" class="d"/>
<text transform="translate(503.5,255) scale(.8,1)" x="0" fill="#00ff00" text-anchor="middle" class="h">7</text>
<path d="M537.5 388v13M550.5 397v4M545.5 388v13M541.5 388v13M535 386.5h1M539 386.5h1M543 386.5h1M536 387.5h1M538 387.5h1M540 387.5h1M542 387.5h1M544 387.5h1M549 398.5h1M551 398.5h1M546 401.5h1M549 401.5h1M547 402.5h2" stroke="#0000ff" class="d"/>
<text transform="translate(462.5,172) scale(.8,1)" x="0" fill="#0000ff" text-anchor="middle" class="h">8</text>
<path d="M566.5 252v5M562 252.5h4M565 253.5h1M564 254.5h1M563 255.5h1M562 256.5h1M561 257.5h1M552 258.5h1M560 258.5h1M553 259.5h1M559 259.5h1M554 260.5h1M558 260.5h1M555 261.5h1M557 261.5h1M556 262.5h1M555 263.5h1M557 263.5h1M554 264.5h1M558 264.5h1M553 265.5h1M559 265.5h1M552 266.5h1M560 266.5h1M551 267.5h1M550 268.5h1" stroke="#ff0000" class="d"/>
<text transform="translate(394.5,117) scale(.8,1)" x="0" fill="#ff0000" text-anchor="middle" class="h">9</text>
<path d="M498.5 127v9M512.5 129v3M512.5 137v5M500.5 137v5M504.5 127v3M510.5 133v3M502.5 131v5M508 127.5h3M497 128.5h1M505 128.5h1M507 128.5h1M511 128.5h1M496 129.5h1M506 129.5h1M503 130.5h1M507 130.5h1M507 131.5h1M508 132.5h1M511 132.5h1M509 133.5h1M509 134.5h1M499 136.5h1M501 136.5h1M511 136.5h1M511 142.5h1M510 143.5h1" stroke="#ffff00" class="d"/>
<text transform="translate(297.5,94) scale(.8,1)" x="-5 5" fill="#ffff00" text-anchor="middle" class="h">10</text>
<path d="M397.5 49v3M397.5 59v3M391.5 49v3M391.5 59v3M390 47.5h1M396 47.5h1M402 47.5h1M389 48.5h2M395 48.5h2M401 48.5h1M389 49.5h1M395 49.5h1M401 49.5h1M388 50.5h1M394 50.5h1M400 50.5h1M387 51.5h1M393 51.5h1M399 51.5h1M387 52.5h1M392 52.5h2M398 52.5h2M386 53.5h1M392 53.5h1M398 53.5h1M390 57.5h1M396 57.5h1M402 57.5h1M389 58.5h2M395 58.5h2M401 58.5h1M389 59.5h1M395 59.5h1M401 59.5h1M388 60.5h1M394 60.5h1M400 60.5h1M387 61.5h1M393 61.5h1M399 61.5h1M387 62.5h1M392 62.5h2M398 62.5h2M386 63.5h1M392 63.5h1M398 63.5h1" stroke="#00ff00" class="d"/>
<text transform="translate(177.5,133) scale(.8,1)" x="-5 5" fill="#00ff00" text-anchor="middle" class="h">11</text>
<path d="M264.5 37v7M256.5 37v7M252 32.5h1M268 32.5h1M253 33.5h1M267 33.5h1M254 34.5h1M266 34.5h1M255 35.5h1M265 35.5h1M255 36.5h1M265 36.5h1M252 40.5h4M257 40.5h7M265 40.5h4M255 44.5h1M265 44.5h1M255 45.5h1M265 45.5h1M254 46.5h1M266 46.5h1M253 47.5h1M267 47.5h1M252 48.5h1M268 48.5h1" stroke="#0000ff" class="d"/>
<text transform="translate(99.5,241) scale(.8,1)" x="-5 5" fill="#0000ff" text-anchor="middle" class="h">12</text>
<line x1="338.5" y1="148.5" x2="338.5" y2="136.5" stroke="#ffffff" />
<text y="133" fill="#ffff00" class="g"><tspan x="332.6" textLength="9.8" lengthAdjust="spacingAndGlyphs">M</tspan><tspan x="344.4" textLength="6.4" lengthAdjust="spacingAndGlyphs">C</tspan></text>
<rect x="337" y="154" width="1" height="1" fill="#ffff00"/>
<line x1="143.5" y1="299.5" x2="131.5" y2="299.5" stroke="#ffffff" />
<text y="308" fill="#ff0000" class="g"><tspan x="110.4" textLength="6.2" lengthAdjust="spacingAndGlyphs">A</tspan><tspan x="117.2" textLength="5.6" lengthAdjust="spacingAndGlyphs" font-size="21">s</tspan><tspan x="123.2" textLength="5.6" lengthAdjust="spacingAndGlyphs" font-size="21">c</tspan></text>
<rect x="149" y="299" width="1" height="1" fill="#ff0000"/>
<line x1="307.5" y1="144.5" x2="307.5" y2="132.5" stroke="#808080" />
<path d="M312.5 122v5M304.5 122v5M314.5 116v5M302.5 116v5M306 112.5h5M305 113.5h1M311 113.5h1M304 114.5h1M312 114.5h1M303 115.5h1M313 115.5h1M303 121.5h1M313 121.5h1M302 124.5h2M313 124.5h2M301 125.5h1M315 125.5h1M300 126.5h1M316 126.5h1M301 127.5h1M303 127.5h1M313 127.5h1M315 127.5h1M302 128.5h1M314 128.5h1" stroke="#008080" class="d"/>
<rect x="307" y="150" width="1" height="1" fill="#008080"/>
<line x1="444.5" y1="244.5" x2="456.5" y2="240.5" stroke="#ffffff" />
<path d="M461.5 227v5M467.5 235v9M469.5 228v3M473.5 227v5M465.5 228v3M466 227.5h3M466 231.5h3M462 232.5h1M472 232.5h1M462 233.5h1M472 233.5h1M463 234.5h2M470 234.5h2M465 235.5h2M468 235.5h2M463 239.5h4M468 239.5h4" stroke="#0000ff" class="d"/>
<rect x="439" y="246" width="1" height="1" fill="#0000ff"/>
<line x1="344.5" y1="150.5" x2="355.5" y2="141.5" stroke="#ffffff" />
<path d="M353.5 122v5M359.5 122v17M365.5 122v5M352 124.5h1M354 124.5h1M357 124.5h2M360 124.5h2M364 124.5h1M366 124.5h1M354 127.5h1M364 127.5h1M354 128.5h1M364 128.5h1M355 129.5h2M362 129.5h2M357 130.5h2M360 130.5h2M355 134.5h4M360 134.5h4" stroke="#0000ff" class="d"/>
<rect x="343" y="156" width="1" height="1" fill="#0000ff"/>
<line x1="276.5" y1="145.5" x2="274.5" y2="133.5" stroke="#808080" />
<path d="M277.5 115v7M275.5 126v3M269.5 115v7M273.5 117v9M271.5 126v3M267 113.5h1M279 113.5h1M268 114.5h1M278 114.5h1M270 119.5h3M274 119.5h3M268 122.5h1M278 122.5h1M267 123.5h1M279 123.5h1M272 125.5h1M274 125.5h1M272 129.5h3" stroke="#00ff00" class="d"/>
<rect x="277" y="151" width="1" height="1" fill="#00ff00"/>
<line x1="300.5" y1="455.5" x2="300.5" y2="467.5" stroke="#ffffff" />
<path d="M304.5 483v3M298.5 471v15M306.5 479v3M294 473.5h4M299 473.5h4M302 477.5h3M301 478.5h1M305 478.5h1M299 479.5h2M305 482.5h1M305 486.5h1M306 487.5h1" stroke="#ffff00" class="d"/>
<rect x="300" y="449" width="1" height="1" fill="#ffff00"/>
<line x1="450.5" y1="261.5" x2="461.5" y2="258.5" stroke="#ffffff" />
<path d="M477.5 249v15M468.5 259v3M471.5 251v4M479 247.5h1M478 248.5h1M468 249.5h2M470 250.5h1M470 255.5h1M470 256.5h1M469 257.5h1M469 258.5h1M467 261.5h1M469 261.5h8M478 261.5h4" stroke="#ff0000" class="d"/>
<rect x="444" y="262" width="1" height="1" fill="#ff0000"/>
<line x1="172.5" y1="389.5" x2="163.5" y2="396.5" stroke="#ffffff" />
<path d="M161.5 395v6M155.5 404v5M145.5 404v5M156 395.5h5M160 396.5h1M159 397.5h1M158 398.5h1M157 399.5h1M156 400.5h1M148 401.5h5M155 401.5h1M147 402.5h1M153 402.5h2M146 403.5h1M154 403.5h1M146 409.5h1M154 409.5h1M147 410.5h1M153 410.5h1M148 411.5h5" stroke="#ff0000" class="d"/>
<rect x="177" y="386" width="1" height="1" fill="#ff0000"/>
<line x1="355.5" y1="444.5" x2="359.5" y2="455.5" stroke="#ffffff" />
<path d="M367.5 461v5M363.5 467v9M359.5 461v5M361 459.5h5M360 460.5h1M366 460.5h1M360 466.5h1M366 466.5h1M361 467.5h2M364 467.5h2M359 471.5h4M364 471.5h4" stroke="#00ff00" class="d"/>
<rect x="352" y="439" width="1" height="1" fill="#00ff00"/>
<line x1="416.5" y1="402.5" x2="425.5" y2="409.5" stroke="#ffffff" />
<path d="M438.5 413v5M434.5 419v7M430.5 413v5M430 409.5h1M438 409.5h1M431 410.5h1M437 410.5h1M432 411.5h5M431 412.5h1M437 412.5h1M431 418.5h1M437 418.5h1M432 419.5h2M435 419.5h2M430 423.5h4M435 423.5h4" stroke="#00ff00" class="d"/>
<rect x="411" y="398" width="1" height="1" fill="#00ff00"/>
<line x1="374.5" y1="435.5" x2="380.5" y2="446.5" stroke="#ffffff" />
<path d="M384.5 455v3M392.5 454v5M382 448.5h5M381 449.5h1M387 449.5h2M380 450.5h1M389 450.5h1M381 451.5h1M390 451.5h1M382 452.5h1M391 452.5h1M383 453.5h1M391 453.5h1M383 454.5h1M383 458.5h1M383 459.5h1M391 459.5h1M382 460.5h1M391 460.5h1M381 461.5h1M390 461.5h1M380 462.5h1M389 462.5h1M381 463.5h1M387 463.5h2M382 464.5h5" stroke="#0000ff" class="d"/>
<rect x="371" y="430" width="1" height="1" fill="#0000ff"/>
<line x1="443.5" y1="359.5" x2="454.5" y2="363.5" stroke="#ffffff" />
<path d="M473.5 366v5M457.5 366v5M463 360.5h5M461 361.5h2M468 361.5h2M460 362.5h1M470 362.5h1M459 363.5h1M471 363.5h1M458 364.5h1M472 364.5h1M458 365.5h1M472 365.5h1M465 368.5h1M458 371.5h1M472 371.5h1M458 372.5h1M472 372.5h1M459 373.5h1M471 373.5h1M460 374.5h1M470 374.5h1M461 375.5h2M468 375.5h2M463 376.5h5" stroke="#ff0000" class="d"/>
<rect x="437" y="357" width="1" height="1" fill="#ff0000"/>
<path d="M341 162.5h1M339 161.5h1M337 161.5h1M335 160.5h1" stroke="#ffff00" class="d"/>
<path d="M407 394.5h1M406 392.5h1M406 390.5h1M405 388.5h1M405 386.5h1M404 384.5h1M403 382.5h1M403 380.5h1M402 378.5h1M401 376.5h1M401 374.5h1M400 372.5h1M400 370.5h1M399 368.5h1M398 366.5h1M398 364.5h1M397 362.5h1M397 360.5h1M396 358.5h1M395 356.5h1M395 354.5h1M394 352.5h1M393 350.5h1M393 348.5h1M392 346.5h1M392 344.5h1M391 342.5h1M390 340.5h1M390 338.5h1M389 336.5h1M389 334.5h1M388 332.5h1M387 330.5h1M387 328.5h1M386 326.5h1M385 324.5h1M385 322.5h1M384 320.5h1M384 318.5h1M383 316.5h1M382 314.5h1M382 312.5h1M381 310.5h1M381 308.5h1M380 306.5h1M379 304.5h1M379 302.5h1M378 300.5h1M377 298.5h1M377 296.5h1M376 294.5h1M376 292.5h1M375 290.5h1M374 288.5h1M374 286.5h1M373 284.5h1M373 282.5h1M372 280.5h1M371 278.5h1M371 276.5h1M370 274.5h1M369 272.5h1M369 270.5h1M368 268.5h1M368 266.5h1M367 264.5h1M366 262.5h1M366 260.5h1M365 258.5h1M365 256.5h1M364 254.5h1M363 252.5h1M363 250.5h1M362 248.5h1M361 246.5h1M361 244.5h1M360 242.5h1M360 240.5h1M359 238.5h1M358 236.5h1M358 234.5h1M357 232.5h1M357 230.5h1M356 228.5h1M355 226.5h1M355 224.5h1M354 222.5h1M353 220.5h1M353 218.5h1M352 216.5h1M352 214.5h1M351 212.5h1M350 210.5h1M350 208.5h1M349 206.5h1M349 204.5h1M348 202.5h1M347 200.5h1M347 198.5h1M346 196.5h1M345 194.5h1M345 192.5h1M344 190.5h1M344 188.5h1M343 186.5h1M342 184.5h1M342 182.5h1M341 180.5h1M341 178.5h1M340 176.5h1M339 174.5h1M339 172.5h1M338 170.5h1M337 168.5h1M337 166.5h1M336 164.5h1M336 162.5h1M335 160.5h1" stroke="#00ff00" class="d"/>
<path d="M432 354.5h1M430 350.5h1M428 346.5h1M426 342.5h1M424 338.5h1M422 334.5h1M420 330.5h1M418 326.5h1M416 322.5h1M414 318.5h1M412 314.5h1M410 310.5h1M408 306.5h1M406 302.5h1M404 298.5h1M402 294.5h1M400 290.5h1M398 286.5h1M396 282.5h1M394 278.5h1M392 274.5h1M390 270.5h1M388 266.5h1M386 262.5h1M384 258.5h1M382 254.5h1M380 250.5h1M378 246.5h1M376 242.5h1M374 238.5h1M372 234.5h1M370 230.5h1M368 226.5h1M366 222.5h1M364 218.5h1M362 214.5h1M360 210.5h1M358 206.5h1M356 202.5h1M354 198.5h1M352 194.5h1M350 190.5h1M348 186.5h1M346 182.5h1M344 178.5h1M342 174.5h1M340 170.5h1M338 166.5h1M336 162.5h1" stroke="#ff0000" class="d"/>
<line x1="300.5" y1="443.5" x2="155.5" y2="299.5" stroke="#ff0000" />
<line x1="368.5" y1="425.5" x2="155.5" y2="299.5" stroke="#00ff00" />
<path d="M438 264.5h1M437 260.5h1M436 256.5h1M434 252.5h1M433 248.5h1" stroke="#ffff00" class="d"/>
<line x1="350.5" y1="433.5" x2="433.5" y2="248.5" stroke="#ff0000" />
<path d="M407 394.5h1M407 392.5h1M408 390.5h1M408 388.5h1M408 386.5h1M409 384.5h1M409 382.5h1M409 380.5h1M410 378.5h1M410 376.5h1M411 374.5h1M411 372.5h1M411 370.5h1M412 368.5h1M412 366.5h1M412 364.5h1M413 362.5h1M413 360.5h1M413 358.5h1M414 356.5h1M414 354.5h1M414 352.5h1M415 350.5h1M415 348.5h1M416 346.5h1M416 344.5h1M416 342.5h1M417 340.5h1M417 338.5h1M417 336.5h1M418 334.5h1M418 332.5h1M418 330.5h1M419 328.5h1M419 326.5h1M419 324.5h1M420 322.5h1M420 320.5h1M421 318.5h1M421 316.5h1M421 314.5h1M422 312.5h1M422 310.5h1M422 308.5h1M423 306.5h1M423 304.5h1M423 302.5h1M424 300.5h1M424 298.5h1M424 296.5h1M425 294.5h1M425 292.5h1M426 290.5h1M426 288.5h1M426 286.5h1M427 284.5h1M427 282.5h1M427 280.5h1M428 278.5h1M428 276.5h1M428 274.5h1M429 272.5h1M429 270.5h1M429 268.5h1M430 266.5h1M430 264.5h1M431 262.5h1M431 260.5h1M431 258.5h1M432 256.5h1M432 254.5h1M432 252.5h1M433 250.5h1M433 248.5h1" stroke="#00ffff" class="d"/>
<line x1="438.5" y1="264.5" x2="341.5" y2="162.5" stroke="#00ffff" />
<path d="M407 394.5h1M406 391.5h1M405 388.5h1M404 385.5h1M404 382.5h1M403 379.5h1M402 376.5h1M401 373.5h1M400 370.5h1M399 367.5h1M398 364.5h1M398 361.5h1M397 358.5h1M396 355.5h1M395 352.5h1M394 349.5h1M393 346.5h1M392 343.5h1M392 340.5h1M391 337.5h1M390 334.5h1M389 331.5h1M388 328.5h1M387 325.5h1M387 322.5h1M386 319.5h1M385 316.5h1M384 313.5h1M383 310.5h1M382 307.5h1M381 304.5h1M381 301.5h1M380 298.5h1M379 295.5h1M378 292.5h1M377 289.5h1M376 286.5h1M375 283.5h1M375 280.5h1M374 277.5h1M373 274.5h1M372 271.5h1M371 268.5h1M370 265.5h1M369 262.5h1M369 259.5h1M368 256.5h1M367 253.5h1M366 250.5h1M365 247.5h1M364 244.5h1M363 241.5h1M363 238.5h1M362 235.5h1M361 232.5h1M360 229.5h1M359 226.5h1M358 223.5h1M358 220.5h1M357 217.5h1M356 214.5h1M355 211.5h1M354 208.5h1M353 205.5h1M352 202.5h1M352 199.5h1M351 196.5h1M350 193.5h1M349 190.5h1M348 187.5h1M347 184.5h1M346 181.5h1M346 178.5h1M345 175.5h1M344 172.5h1M343 169.5h1M342 166.5h1M341 163.5h1" stroke="#00ff00" class="d"/>
<path d="M432 354.5h1M431 351.5h1M429 348.5h1M428 345.5h1M426 342.5h1M425 339.5h1M423 336.5h1M422 333.5h1M421 330.5h1M419 327.5h1M418 324.5h1M416 321.5h1M415 318.5h1M414 315.5h1M412 312.5h1M411 309.5h1M409 306.5h1M408 303.5h1M406 300.5h1M405 297.5h1M404 294.5h1M402 291.5h1M401 288.5h1M399 285.5h1M398 282.5h1M396 279.5h1M395 276.5h1M394 273.5h1M392 270.5h1M391 267.5h1M389 264.5h1M388 261.5h1M387 258.5h1M385 255.5h1M384 252.5h1M382 249.5h1M381 246.5h1M379 243.5h1M378 240.5h1M377 237.5h1M375 234.5h1M374 231.5h1M372 228.5h1M371 225.5h1M369 222.5h1M368 219.5h1M367 216.5h1M365 213.5h1M364 210.5h1M362 207.5h1M361 204.5h1M359 201.5h1M358 198.5h1M357 195.5h1M355 192.5h1M354 189.5h1M352 186.5h1M351 183.5h1M350 180.5h1M348 177.5h1M347 174.5h1M345 171.5h1M344 168.5h1M342 165.5h1M341 162.5h1" stroke="#ff0000" class="d"/>
<path d="M438 264.5h1M435 262.5h1M432 260.5h1M429 258.5h1M426 256.5h1M423 254.5h1M420 252.5h1M417 250.5h1M414 248.5h1M411 246.5h1M408 244.5h1M405 242.5h1M402 240.5h1M399 238.5h1M396 236.5h1M393 234.5h1M390 232.5h1M387 230.5h1M384 228.5h1M381 226.5h1M378 224.5h1M375 222.5h1M372 220.5h1M369 218.5h1M366 216.5h1M363 214.5h1M360 212.5h1M357 210.5h1M354 208.5h1M351 206.5h1M348 204.5h1M345 202.5h1M342 200.5h1M339 198.5h1M336 196.5h1M333 194.5h1M330 192.5h1M327 190.5h1M324 188.5h1M321 186.5h1M318 184.5h1M315 182.5h1M312 180.5h1M309 178.5h1M306 176.5h1M303 174.5h1M300 172.5h1M297 170.5h1M294 168.5h1M291 166.5h1M288 164.5h1M285 162.5h1M282 160.5h1M279 158.5h1" stroke="#ff0000" class="d"/>
<path d="M182 382.5h1M183 380.5h1M184 378.5h1M185 376.5h1M185 374.5h1M186 372.5h1M187 370.5h1M188 368.5h1M189 366.5h1M190 364.5h1M191 362.5h1M191 360.5h1M192 358.5h1M193 356.5h1M194 354.5h1M195 352.5h1M196 350.5h1M197 348.5h1M197 346.5h1M198 344.5h1M199 342.5h1M200 340.5h1M201 338.5h1M202 336.5h1M202 334.5h1M203 332.5h1M204 330.5h1M205 328.5h1M206 326.5h1M207 324.5h1M208 322.5h1M208 320.5h1M209 318.5h1M210 316.5h1M211 314.5h1M212 312.5h1M213 310.5h1M214 308.5h1M214 306.5h1M215 304.5h1M216 302.5h1M217 300.5h1M218 298.5h1M219 296.5h1M220 294.5h1M220 292.5h1M221 290.5h1M222 288.5h1M223 286.5h1M224 284.5h1M225 282.5h1M226 280.5h1M226 278.5h1M227 276.5h1M228 274.5h1M229 272.5h1M230 270.5h1M231 268.5h1M231 266.5h1M232 264.5h1M233 262.5h1M234 260.5h1M235 258.5h1M236 256.5h1M237 254.5h1M237 252.5h1M238 250.5h1M239 248.5h1M240 246.5h1M241 244.5h1M242 242.5h1M243 240.5h1M243 238.5h1M244 236.5h1M245 234.5h1M246 232.5h1M247 230.5h1M248 228.5h1M249 226.5h1M249 224.5h1M250 222.5h1M251 220.5h1M252 218.5h1M253 216.5h1M254 214.5h1M255 212.5h1M255 210.5h1M256 208.5h1M257 206.5h1M258 204.5h1M259 202.5h1M260 200.5h1M261 198.5h1M261 196.5h1M262 194.5h1M263 192.5h1M264 190.5h1M265 188.5h1M266 186.5h1M266 184.5h1M267 182.5h1M268 180.5h1M269 178.5h1M270 176.5h1M271 174.5h1M272 172.5h1M272 170.5h1M273 168.5h1M274 166.5h1M275 164.5h1M276 162.5h1M277 160.5h1M278 158.5h1" stroke="#00ff00" class="d"/>
<line x1="432.5" y1="354.5" x2="278.5" y2="157.5" stroke="#00ff00" />
<path d="M182 382.5h1M185 384.5h1M188 385.5h1M191 387.5h1M194 388.5h1M197 390.5h1M200 391.5h1M203 393.5h1M206 394.5h1M209 396.5h1M212 398.5h1M215 399.5h1M218 401.5h1M221 402.5h1M224 404.5h1M227 405.5h1M230 407.5h1M233 408.5h1M236 410.5h1M239 411.5h1M242 413.5h1M245 415.5h1M248 416.5h1M251 418.5h1M254 419.5h1M257 421.5h1M260 422.5h1M263 424.5h1M266 425.5h1M269 427.5h1M272 429.5h1M275 430.5h1M278 432.5h1M281 433.5h1M284 435.5h1M287 436.5h1M290 438.5h1M293 439.5h1M296 441.5h1M299 442.5h1" stroke="#00ffff" class="d"/>
<path d="M432 354.5h1M428 357.5h1M424 359.5h1M420 362.5h1M416 365.5h1M412 367.5h1M408 370.5h1M404 373.5h1M400 376.5h1M396 378.5h1M392 381.5h1M388 384.5h1M384 386.5h1M380 389.5h1M376 392.5h1M372 394.5h1M368 397.5h1M364 400.5h1M360 403.5h1M356 405.5h1M352 408.5h1M348 411.5h1M344 413.5h1M340 416.5h1M336 419.5h1M332 421.5h1M328 424.5h1M324 427.5h1M320 430.5h1M316 432.5h1M312 435.5h1M308 438.5h1M304 440.5h1M300 443.5h1" stroke="#00ffff" class="d"/>
<path d="M350 433.5h1M352 429.5h1M354 425.5h1M356 421.5h1M358 417.5h1M360 413.5h1M362 409.5h1M365 405.5h1M367 401.5h1M369 397.5h1M371 393.5h1M373 389.5h1M375 385.5h1M377 381.5h1M379 377.5h1M381 373.5h1M383 369.5h1M385 365.5h1M387 361.5h1M390 357.5h1M392 353.5h1M394 349.5h1M396 345.5h1M398 341.5h1M400 337.5h1M402 333.5h1M404 329.5h1M406 325.5h1M408 321.5h1M410 317.5h1M412 313.5h1M415 309.5h1M417 305.5h1M419 301.5h1M421 297.5h1M423 293.5h1M425 289.5h1M427 285.5h1M429 281.5h1M431 277.5h1M433 273.5h1M435 269.5h1M437 265.5h1" stroke="#ff0000" class="d"/>
<path d="M407 394.5h1M408 391.5h1M408 388.5h1M409 385.5h1M410 382.5h1M411 379.5h1M411 376.5h1M412 373.5h1M413 370.5h1M413 367.5h1M414 364.5h1M415 361.5h1M416 358.5h1M416 355.5h1M417 352.5h1M418 349.5h1M418 346.5h1M419 343.5h1M420 340.5h1M421 337.5h1M421 334.5h1M422 331.5h1M423 328.5h1M423 325.5h1M424 322.5h1M425 319.5h1M426 316.5h1M426 313.5h1M427 310.5h1M428 307.5h1M428 304.5h1M429 301.5h1M430 298.5h1M431 295.5h1M431 292.5h1M432 289.5h1M433 286.5h1M433 283.5h1M434 280.5h1M435 277.5h1M436 274.5h1M436 271.5h1M437 268.5h1M438 265.5h1" stroke="#00ffff" class="d"/>
<path d="M368 425.5h1M364 424.5h1M360 423.5h1M356 422.5h1M352 421.5h1M348 420.5h1M344 419.5h1M340 419.5h1M336 418.5h1M332 417.5h1M328 416.5h1M324 415.5h1M320 414.5h1M316 413.5h1M312 412.5h1M308 411.5h1M304 410.5h1M300 409.5h1M296 408.5h1M292 407.5h1M288 407.5h1M284 406.5h1M280 405.5h1M276 404.5h1M272 403.5h1M268 402.5h1M264 401.5h1M260 400.5h1M256 399.5h1M252 398.5h1M248 397.5h1M244 396.5h1M240 395.5h1M236 394.5h1M232 394.5h1M228 393.5h1M224 392.5h1M220 391.5h1M216 390.5h1M212 389.5h1M208 388.5h1M204 387.5h1M200 386.5h1M196 385.5h1M192 384.5h1M188 383.5h1M184 382.5h1" stroke="#ff0000" class="d"/>
<line x1="432.5" y1="354.5" x2="182.5" y2="382.5" stroke="#00ff00" />
<path d="M368 425.5h1M364 427.5h1M360 429.5h1M356 430.5h1M352 432.5h1" stroke="#ffff00" class="d"/>
<rect x="0.5" y="0.5" width="759" height="599" fill="none" stroke="#c0c0c0"/>
<line x1="599.5" y1="0" x2="599.5" y2="600" stroke="#c0c0c0"/>
<text x="606" y="14" fill="#ffffff" stroke="#ffffff" class="t">Astrolog 5.40</text>
<text x="606" y="24" fill="#c0c0c0" stroke="#c0c0c0" class="t">"Anonymous"</text>
<text x="606" y="34" fill="#c0c0c0" stroke="#c0c0c0" class="t">Tue November 6, 2007</text>
<text x="606" y="44" fill="#c0c0c0" stroke="#c0c0c0" class="t"> 6:29pm (ST +8:00 GMT)</text>
<text x="606" y="54" fill="#c0c0c0" stroke="#c0c0c0" class="t">"Taiwan"</text>
<text x="606" y="64" fill="#c0c0c0" stroke="#c0c0c0" class="t">121°27E 25°01N</text>
<text x="606" y="74" fill="#c0c0c0" stroke="#c0c0c0" class="t">Regiomontanus houses.</text>
<text x="606" y="84" fill="#c0c0c0" stroke="#c0c0c0" class="t">Tropical, Geocentric.</text>
<text x="606" y="94" fill="#c0c0c0" stroke="#c0c0c0" class="t">Julian Day = 2454410.9368</text>
<text x="606" y="114" fill="#ff0000" stroke="#ff0000" class="t"> 1st house: </text>
<text x="678" y="114" fill="#00ff00" stroke="#00ff00" class="t"> 6Gem21</text>
<path d="M750.5 107v7M747.5 107v7M745 106.5h1M752 106.5h1M746 107.5h1M748 107.5h2M751 107.5h1M746 113.5h1M748 113.5h2M751 113.5h1M745 114.5h1M752 114.5h1" stroke="#ff0000" class="d"/>
<text x="606" y="124" fill="#ffff00" stroke="#ffff00" class="t"> 2nd house: </text>
<text x="678" y="124" fill="#0000ff" stroke="#0000ff" class="t"> 3Can42</text>
<path d="M747 117.5h3M745 118.5h2M750 118.5h2M744 119.5h1M749 119.5h1M752 119.5h1M745 120.5h2M749 120.5h1M752 120.5h1M744 121.5h1M747 121.5h1M750 121.5h2M744 122.5h1M747 122.5h1M752 122.5h1M745 123.5h2M750 123.5h2M747 124.5h3" stroke="#ffff00" class="d"/>
<text x="606" y="134" fill="#00ff00" stroke="#00ff00" class="t"> 3rd house: </text>
<text x="678" y="134" fill="#0000ff" stroke="#0000ff" class="t">27Can00</text>
<path d="M747 127.5h3M745 128.5h2M750 128.5h2M744 129.5h1M749 129.5h1M752 129.5h1M745 130.5h2M749 130.5h1M752 130.5h1M744 131.5h1M747 131.5h1M750 131.5h2M744 132.5h1M747 132.5h1M752 132.5h1M745 133.5h2M750 133.5h2M747 134.5h3" stroke="#00ff00" class="d"/>
<text x="606" y="144" fill="#0000ff" stroke="#0000ff" class="t"> 4th house: </text>
<text x="678" y="144" fill="#ff0000" stroke="#ff0000" class="t">21Leo35</text>
<path d="M751.5 138v3M745.5 138v3M747 136.5h3M746 137.5h1M750 137.5h1M746 141.5h1M750 141.5h1M744 142.5h1M746 142.5h1M750 142.5h1M745 143.5h1M751 143.5h1M752 144.5h1" stroke="#0000ff" class="d"/>
<text x="606" y="154" fill="#ff0000" stroke="#ff0000" class="t"> 5th house: </text>
<text x="678" y="154" fill="#ffff00" stroke="#ffff00" class="t">22Vir41</text>
<path d="M751.5 147v6M745.5 147v7M749.5 147v6M747.5 147v7M744 146.5h1M746 146.5h1M748 146.5h1M750 148.5h1M750 153.5h1M749 154.5h1M751 154.5h1" stroke="#ff0000" class="d"/>
<text x="606" y="164" fill="#ffff00" stroke="#ffff00" class="t"> 6th house: </text>
<text x="678" y="164" fill="#0000ff" stroke="#0000ff" class="t"> 0Sco56</text>
<path d="M749.5 157v7M745.5 157v7M747.5 157v7M744 156.5h1M746 156.5h1M748 156.5h1M752 162.5h1M752 163.5h1M750 164.5h2" stroke="#ffff00" class="d"/>
<text x="606" y="174" fill="#00ff00" stroke="#00ff00" class="t"> 7th house: </text>
<text x="678" y="174" fill="#ff0000" stroke="#ff0000" class="t"> 6Sag21</text>
<path d="M752.5 166v3M750 166.5h2M751 167.5h1M750 168.5h1M745 169.5h1M749 169.5h1M746 170.5h1M748 170.5h1M747 171.5h1M746 172.5h1M748 172.5h1M745 173.5h1M749 173.5h1M744 174.5h1" stroke="#00ff00" class="d"/>
<text x="606" y="184" fill="#0000ff" stroke="#0000ff" class="t"> 8th house: </text>
<text x="678" y="184" fill="#ffff00" stroke="#ffff00" class="t"> 3Cap42</text>
<path d="M752.5 181v3M745.5 176v5M747.5 178v3M746.5 181v3M748 176.5h1M750 176.5h2M744 177.5h1M748 177.5h2M752 177.5h1M750 178.5h1M752 178.5h1M751 179.5h1M751 180.5h1M751 184.5h1" stroke="#0000ff" class="d"/>
<text x="606" y="194" fill="#ff0000" stroke="#ff0000" class="t"> 9th house: </text>
<text x="678" y="194" fill="#ffff00" stroke="#ffff00" class="t">27Cap00</text>
<path d="M752.5 191v3M745.5 186v5M747.5 188v3M746.5 191v3M748 186.5h1M750 186.5h2M744 187.5h1M748 187.5h2M752 187.5h1M750 188.5h1M752 188.5h1M751 189.5h1M751 190.5h1M751 194.5h1" stroke="#ff0000" class="d"/>
<text x="606" y="204" fill="#ffff00" stroke="#ffff00" class="t">10th house: </text>
<text x="678" y="204" fill="#00ff00" stroke="#00ff00" class="t">21Aqu35</text>
<path d="M746 196.5h1M749 196.5h1M752 196.5h1M745 197.5h2M748 197.5h2M751 197.5h1M745 198.5h1M747 198.5h2M750 198.5h2M744 199.5h1M747 199.5h1M750 199.5h1M746 201.5h1M749 201.5h1M752 201.5h1M745 202.5h2M748 202.5h2M751 202.5h1M745 203.5h1M747 203.5h2M750 203.5h2M744 204.5h1M747 204.5h1M750 204.5h1" stroke="#ffff00" class="d"/>
<text x="606" y="214" fill="#00ff00" stroke="#00ff00" class="t">11th house: </text>
<text x="678" y="214" fill="#0000ff" stroke="#0000ff" class="t">22Pis41</text>
<path d="M750.5 208v5M746.5 208v5M744 206.5h1M752 206.5h1M745 207.5h1M751 207.5h1M744 210.5h2M747 210.5h3M751 210.5h2M745 213.5h1M751 213.5h1M744 214.5h1M752 214.5h1" stroke="#00ff00" class="d"/>
<text x="606" y="224" fill="#0000ff" stroke="#0000ff" class="t">12th house: </text>
<text x="678" y="224" fill="#ffff00" stroke="#ffff00" class="t"> 0Tau56</text>
<path d="M751.5 220v3M745.5 220v3M745 216.5h1M751 216.5h1M746 217.5h1M750 217.5h1M747 218.5h3M746 219.5h1M750 219.5h1M746 223.5h1M750 223.5h1M747 224.5h3" stroke="#0000ff" class="d"/>
<text x="606" y="244" fill="#ff0000" stroke="#ff0000" class="t"> Sun: </text>
<text x="642" y="244" fill="#0000ff" stroke="#0000ff" class="t">13Sco38</text>
<text x="696" y="244" fill="#c0c0c0" stroke="#c0c0c0" class="t">- 0°00'</text>
<path d="M752.5 239v3M744.5 239v3M747 236.5h3M745 237.5h2M750 237.5h2M745 238.5h1M751 238.5h1M748 240.5h1M745 242.5h1M751 242.5h1M745 243.5h2M750 243.5h2M747 244.5h3" stroke="#ff0000" class="d"/>
<text x="606" y="254" fill="#0000ff" stroke="#0000ff" class="t">Moon: </text>
<text x="642" y="254" fill="#00ff00" stroke="#00ff00" class="t"> 5Lib19</text>
<text x="696" y="254" fill="#c0c0c0" stroke="#c0c0c0" class="t">- 2°34'</text>
<path d="M751.5 249v3M747.5 249v3M746 246.5h3M745 247.5h1M749 247.5h2M746 248.5h1M750 248.5h1M746 252.5h1M750 252.5h1M745 253.5h1M749 253.5h2M746 254.5h3" stroke="#0000ff" class="d"/>
<text x="606" y="264" fill="#00ff00" stroke="#00ff00" class="t">Merc: </text>
<text x="642" y="264" fill="#00ff00" stroke="#00ff00" class="t">25Lib05</text>
<text x="696" y="264" fill="#c0c0c0" stroke="#c0c0c0" class="t">+ 2°10'</text>
<path d="M748.5 261v4M750.5 258v3M746.5 258v3M746 256.5h1M750 256.5h1M747 257.5h3M747 261.5h1M749 261.5h1M746 263.5h2M749 263.5h2" stroke="#00ff00" class="d"/>
<text x="606" y="274" fill="#00ff00" stroke="#00ff00" class="t">Venu: </text>
<text x="642" y="274" fill="#ffff00" stroke="#ffff00" class="t">27Vir24</text>
<text x="696" y="274" fill="#c0c0c0" stroke="#c0c0c0" class="t">+ 0°55'</text>
<path d="M748.5 270v5M750.5 267v3M746.5 267v3M747 266.5h3M747 270.5h1M749 270.5h1M746 272.5h2M749 272.5h2" stroke="#00ff00" class="d"/>
<text x="606" y="284" fill="#ff0000" stroke="#ff0000" class="t">Mars: </text>
<text x="642" y="284" fill="#0000ff" stroke="#0000ff" class="t">11Can56</text>
<text x="696" y="284" fill="#c0c0c0" stroke="#c0c0c0" class="t">+ 1°12'</text>
<path d="M752.5 276v3M750 276.5h2M751 277.5h1M750 278.5h1M746 279.5h2M749 279.5h1M745 280.5h1M748 280.5h1M744 281.5h1M749 281.5h1M744 282.5h1M749 282.5h1M745 283.5h1M748 283.5h1M746 284.5h2" stroke="#ff0000" class="d"/>
<text x="606" y="294" fill="#ff0000" stroke="#ff0000" class="t">Jupi: </text>
<text x="642" y="294" fill="#ff0000" stroke="#ff0000" class="t">20Sag43</text>
<text x="696" y="294" fill="#c0c0c0" stroke="#c0c0c0" class="t">+ 0°16'</text>
<path d="M750.5 287v8M751 286.5h1M745 287.5h2M747 288.5h1M747 289.5h1M746 290.5h1M746 291.5h1M745 292.5h1M745 293.5h5M751 293.5h2" stroke="#ff0000" class="d"/>
<text x="606" y="304" fill="#ffff00" stroke="#ffff00" class="t">Satu: </text>
<text x="642" y="304" fill="#ffff00" stroke="#ffff00" class="t"> 6Vir51</text>
<text x="696" y="304" fill="#c0c0c0" stroke="#c0c0c0" class="t">+ 1°28'</text>
<path d="M747.5 296v8M745 297.5h2M748 297.5h2M749 299.5h2M748 300.5h1M751 300.5h1M751 301.5h1M750 302.5h1M750 303.5h1M751 304.5h1" stroke="#ffff00" class="d"/>
<text x="606" y="314" fill="#00ff00" stroke="#00ff00" class="t">Uran: </text>
<text x="642" y="314" fill="#0000ff" stroke="#0000ff" class="t">14Pis55</text>
<text x="684" y="314" fill="#ffffff" stroke="#ffffff" class="t">R</text>
<text x="696" y="314" fill="#c0c0c0" stroke="#c0c0c0" class="t">- 0°48'</text>
<path d="M748.5 308v5M750.5 307v4M746.5 307v4M745 306.5h1M751 306.5h1M747 309.5h1M749 309.5h1M745 311.5h1M751 311.5h1M747 312.5h1M749 312.5h1M747 313.5h1M749 313.5h1M748 314.5h1" stroke="#00ff00" class="d"/>
<text x="606" y="324" fill="#0000ff" stroke="#0000ff" class="t">Nept: </text>
<text x="642" y="324" fill="#00ff00" stroke="#00ff00" class="t">19Aqu15</text>
<text x="696" y="324" fill="#c0c0c0" stroke="#c0c0c0" class="t">- 0°17'</text>
<path d="M748.5 316v9M751.5 316v3M745.5 316v3M744 317.5h1M747 317.5h1M749 317.5h1M752 317.5h1M746 319.5h1M750 319.5h1M747 320.5h1M749 320.5h1M746 322.5h2M749 322.5h2" stroke="#0000ff" class="d"/>
<text x="606" y="334" fill="#0000ff" stroke="#0000ff" class="t">Plut: </text>
<text x="642" y="334" fill="#ff0000" stroke="#ff0000" class="t">27Sag13</text>
<text x="696" y="334" fill="#c0c0c0" stroke="#c0c0c0" class="t">+ 6°25'</text>
<path d="M748.5 330v5M751.5 326v3M745.5 326v3M748 326.5h1M747 327.5h1M749 327.5h1M748 328.5h1M746 329.5h1M750 329.5h1M747 330.5h1M749 330.5h1M746 332.5h2M749 332.5h2" stroke="#0000ff" class="d"/>
<text x="606" y="344" fill="#008080" stroke="#008080" class="t">Node: </text>
<text x="642" y="344" fill="#0000ff" stroke="#0000ff" class="t"> 3Pis17</text>
<text x="684" y="344" fill="#ffffff" stroke="#ffffff" class="t">R</text>
<text x="696" y="344" fill="#c0c0c0" stroke="#c0c0c0" class="t">+ 0°00'</text>
<path d="M751.5 338v3M750.5 341v3M746.5 341v3M745.5 338v3M747 336.5h3M746 337.5h1M750 337.5h1M745 342.5h1M751 342.5h1M744 343.5h1M752 343.5h1M745 344.5h1M751 344.5h1" stroke="#008080" class="d"/>
<text x="606" y="364" fill="#c0c0c0" stroke="#c0c0c0" class="t">Fire: 2, Earth: 2,</text>
<text x="606" y="374" fill="#c0c0c0" stroke="#c0c0c0" class="t">Air : 5, Water: 4</text>
<text x="606" y="384" fill="#c0c0c0" stroke="#c0c0c0" class="t">Car: 3, Fix: 3, Mut: 7</text>
<text x="606" y="394" fill="#c0c0c0" stroke="#c0c0c0" class="t">Yang: 7, Yin: 6</text>
<text x="606" y="404" fill="#c0c0c0" stroke="#c0c0c0" class="t">M: 5, N: 6, A: 3, D: 8</text>
<text x="606" y="414" fill="#c0c0c0" stroke="#c0c0c0" class="t">Ang: 5, Suc: 4, Cad: 2</text>
<text x="606" y="424" fill="#c0c0c0" stroke="#c0c0c0" class="t">Learn: 4, Share: 9</text>
</svg>
</body></html>
